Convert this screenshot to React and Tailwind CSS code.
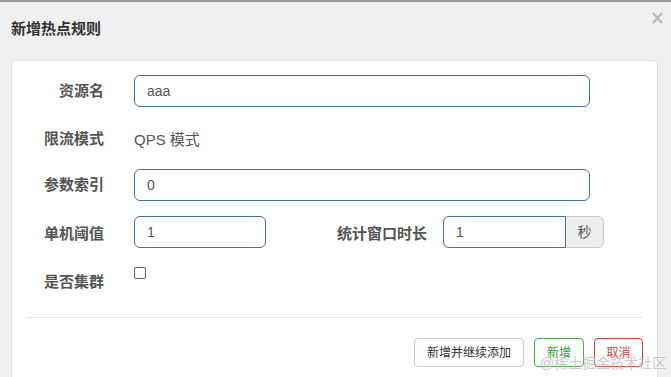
const CJK = { fontFamily: '"Liberation Sans", "Noto Sans CJK SC", sans-serif' };

function Label({ children, className = '' }) {
  return (
    <label className={`h-[32px] text-[15px] font-bold text-[#555] text-right ${className}`}>
      {children}
    </label>
  );
}

function Input({ value, className = '' }) {
  return (
    <input
      readOnly
      value={value}
      className={`h-[32px] border border-[#41719c] rounded-[6px] px-[12px] text-[14px] text-[#555] bg-white outline-none ${className}`}
    />
  );
}

export default function App() {
  return (
    <div className="relative w-[671px] h-[377px] overflow-hidden bg-[#f0f0f0]" style={CJK}>
      <div className="h-[2px] bg-[#999]" />

      {/* Header */}
      <div className="relative flex items-center h-[58px] pl-[11px]">
        <h4 className="text-[15px] font-bold text-[#333] mt-[-4px]">新增热点规则</h4>
        <button className="absolute right-[8px] top-[10px] w-[11px] h-[12px]">
          <svg width="11" height="12" viewBox="0 0 11 12">
            <path d="M1 1 L10 11 M10 1 L1 11" stroke="#b8b8b8" strokeWidth="2.2" />
          </svg>
        </button>
      </div>

      {/* Body panel */}
      <div className="ml-[11px] mr-[13px] bg-white border border-[#ddd] rounded-[4px] h-[340px] pt-[14px] px-[14px]">
        <div className="flex flex-col gap-[15px]">
          <div className="flex h-[32px]">
            <Label className="w-[78px] leading-[32px]">资源名</Label>
            <Input value="aaa" className="ml-[30px] w-[456px]" />
          </div>
          <div className="flex h-[32px]">
            <Label className="w-[78px] leading-[34px]">限流模式</Label>
            <span className="ml-[30px] h-[32px] text-[15px] text-[#555] leading-[36px]">QPS 模式</span>
          </div>
          <div className="flex h-[32px]">
            <Label className="w-[78px] leading-[32px]">参数索引</Label>
            <Input value="0" className="ml-[30px] w-[456px]" />
          </div>
          <div className="flex h-[32px]">
            <Label className="w-[78px] leading-[36px]">单机阈值</Label>
            <Input value="1" className="ml-[30px] w-[132px]" />
            <Label className="ml-[71px] w-[90px] leading-[36px]">统计窗口时长</Label>
            <div className="flex ml-[16px]">
              <Input value="1" className="w-[123px] rounded-r-none" />
              <span className="w-[38px] h-[32px] flex items-center justify-center bg-[#eee] border border-l-0 border-[#ccc] rounded-r-[6px] text-[14px] text-[#555]">
                秒
              </span>
            </div>
          </div>
          <div className="flex h-[32px]">
            <Label className="w-[78px] leading-[38px]">是否集群</Label>
            <div className="ml-[30px] pt-[4px]">
              <span className="block w-[12px] h-[12px] border border-[#666] rounded-[2px]" />
            </div>
          </div>
        </div>

        <div className="mt-[22px] border-t border-[#e5e5e5]" />

        <div className="flex justify-end gap-[10px] mt-[20px]">
          <button className="h-[29px] w-[110px] border border-[#ccc] rounded-[4px] bg-white text-[12px] text-[#333]">
            新增并继续添加
          </button>
          <button className="h-[29px] w-[50px] border border-[#4cae4c] rounded-[4px] bg-white text-[12px] text-[#3c9a3c]">
            新增
          </button>
          <button className="h-[29px] w-[49px] border border-[#d43f3a] rounded-[4px] bg-white text-[12px] text-[#d43f3a]">
            取消
          </button>
        </div>
      </div>

      {/* watermark */}
      <span className="absolute left-[540px] top-[353px] text-[14px] text-[#bdbdbd] opacity-80 pointer-events-none whitespace-nowrap">
        @稀土掘金技术社区
      </span>
    </div>
  );
}
